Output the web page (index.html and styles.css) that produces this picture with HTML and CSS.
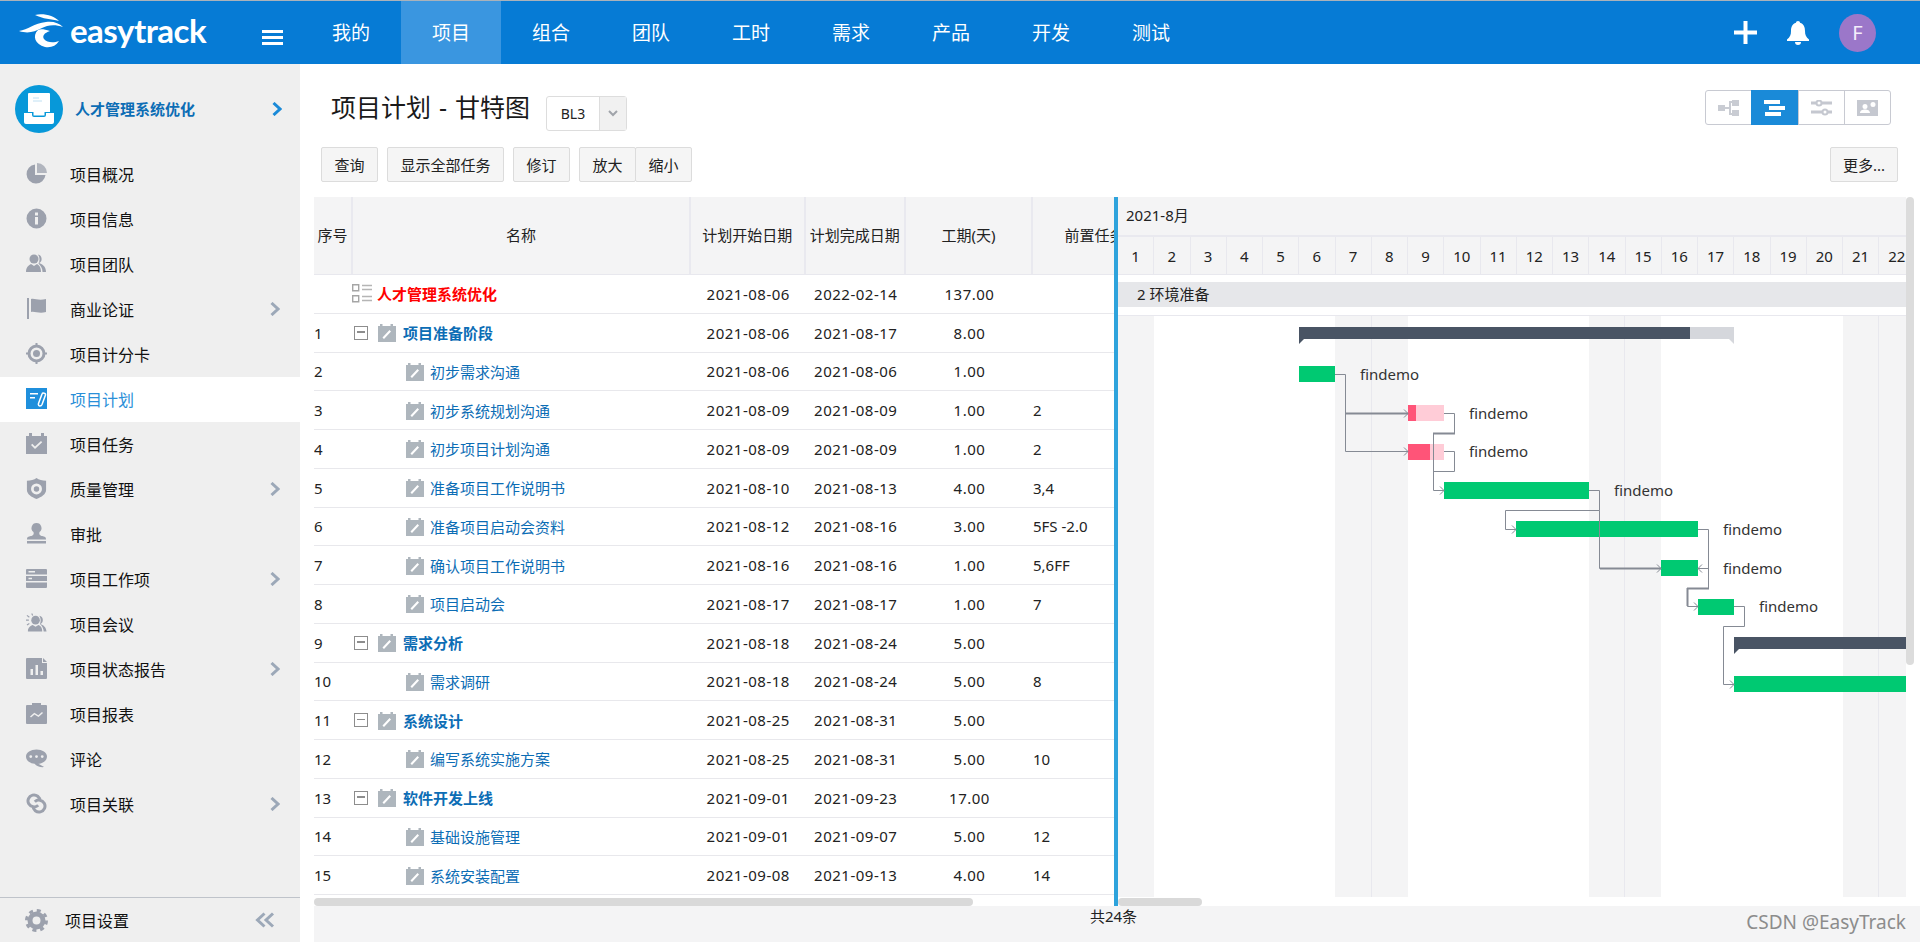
FILE: index.html
```html
<!DOCTYPE html>
<html lang="zh-CN">
<head>
<meta charset="utf-8">
<title>项目计划 - 甘特图</title>
<link rel="stylesheet" href="styles.css">
</head>
<body>
<svg class="defs" width="0" height="0" aria-hidden="true">
  <symbol id="i-pie" viewBox="0 0 21 21"><path d="M9 1.500a9.500 9.500 0 1 0 10.500 10.500H9z"/><path d="M11 0v10h10A10 10 0 0 0 11 0z" opacity=".75"/></symbol>
  <symbol id="i-info" viewBox="0 0 21 21"><path fill-rule="evenodd" d="M10.500.5a10 10 0 1 1 0 20 10 10 0 0 1 0-20zM9 4.500v3h3v-3zM9 9v7.500h3V9z"/></symbol>
  <symbol id="i-team" viewBox="0 0 21 21"><circle cx="8" cy="6" r="4.500"/><path d="M0 19c0-5 3-7 5-8l3 2 3-2c2 1 4 3 4 8z"/><path d="M12 1.500a4.500 4.500 0 0 1 1 8.500c3 1 7 3 7 9h-3.500c0-3.500-1.500-6-4-8.500 1.500-2.500 1.500-6-.5-9z"/></symbol>
  <symbol id="i-flag" viewBox="0 0 21 21"><rect x="1" y="0" width="2" height="21"/><path d="M5 1c4-1 7 2 15 0v13c-7 2-11-1-15 0z"/></symbol>
  <symbol id="i-target" viewBox="0 0 21 21"><circle cx="10.500" cy="10.500" r="7.500" fill="none" stroke="currentColor" stroke-width="3"/><circle cx="10.500" cy="10.500" r="3.500"/><path d="M9.500 0h2v3h-2zM9.500 18h2v3h-2zM0 9.500h3v2H0zM18 9.500h3v2h-3z"/></symbol>
  <symbol id="i-plan" viewBox="0 0 21 21"><rect width="21" height="21" fill="#1f8fdc"/><path d="M4 5h8v1.500H4zM4 9h5v1.500H4z" fill="#fff"/><path d="M14 18c-1 0-2-1-1.500-2.500L16 6c.5-1.500 4-1 3.500 1L16 16.500c-.4 1-1 1.500-2 1.500z" fill="none" stroke="#fff" stroke-width="1.500"/></symbol>
  <symbol id="i-task" viewBox="0 0 21 21"><path fill-rule="evenodd" d="M3 0h3v3h9V0h3v3h3v18H0V3h3zM5 12l1.300-1.300L9 13.400l6-5.400 1.200 1.300L9 16z"/></symbol>
  <symbol id="i-shield" viewBox="0 0 21 23"><path fill-rule="evenodd" d="M10.500 0C13 2 17 3 21 3v10c0 5-5 8-10.500 10C5 21 0 18 0 13V3c4 0 8-1 10.500-3zm0 6a6 6 0 1 0 0 12 6 6 0 0 0 0-12zm0 3a3 3 0 1 1 0 6 3 3 0 0 1 0-6z"/></symbol>
  <symbol id="i-stamp" viewBox="0 0 21 21"><path d="M10.500 0a5 5 0 0 1 3 9c-.6 2 0 3 2 4 2 .3 4.500.6 4.500 3v.500H1V16c0-2.400 2.500-2.700 4.500-3 2-1 2.600-2 2-4a5 5 0 0 1 3-9z"/><rect x="1" y="18" width="19" height="2.500"/></symbol>
  <symbol id="i-server" viewBox="0 0 21 19"><path fill-rule="evenodd" d="M1 0h19a1 1 0 0 1 1 1v4.500H0V1a1 1 0 0 1 1-1zM0 7h21v5H0zM0 13.500h21V18a1 1 0 0 1-1 1H1a1 1 0 0 1-1-1zM2.500 2v1.500H9V2zM2.500 8.700v1.500H6V8.700z"/></symbol>
  <symbol id="i-meeting" viewBox="0 0 22 21"><circle cx="10" cy="7" r="4.500"/><path d="M2 19c0-5 3-6 5-7l3 2 3-2c2 1 4 2 4 7z"/><path d="M14 2.500a4.500 4.500 0 0 1 1 8.500c3 1 6 3 6.500 8H18.500c0-3-1.500-6-4-8 1.500-2.500 1-6-.5-8.500z"/><path d="M1 2l2.500 2M0 7h3M1 12l2.500-1.500M6 0l1 2" stroke="currentColor" stroke-width="1.200"/></symbol>
  <symbol id="i-report" viewBox="0 0 21 21"><path fill-rule="evenodd" d="M1 0h15v5h5v15a1 1 0 0 1-1 1H1a1 1 0 0 1-1-1V1a1 1 0 0 1 1-1zM4.500 11v6H7v-6zM9.500 7v10H12V7zM14.500 13v4H17v-4z"/><path d="M17 0l4 4h-4z"/></symbol>
  <symbol id="i-chart" viewBox="0 0 21 21"><path fill-rule="evenodd" d="M1 2h5V0h9v2h5a1 1 0 0 1 1 1v17a1 1 0 0 1-1 1H1a1 1 0 0 1-1-1V3a1 1 0 0 1 1-1zm3 11.500l1 1 3.500-3 4 2.500 4.500-4-1-1-3.700 3.300-4-2.500z"/></symbol>
  <symbol id="i-comment" viewBox="0 0 22 19"><path fill-rule="evenodd" d="M11 0c6 0 11 3 11 7.500S17 15 13 15l6 3.500c-4 .5-8-1-10-3.500C4 14.500 0 12 0 7.500S5 0 11 0zM5 6a1.500 1.500 0 1 0 0 3 1.500 1.500 0 0 0 0-3zm6 0a1.500 1.500 0 1 0 0 3 1.500 1.500 0 0 0 0-3zm6 0a1.500 1.500 0 1 0 0 3 1.500 1.500 0 0 0 0-3z"/></symbol>
  <symbol id="i-link" viewBox="0 0 21 21"><path d="M12.200 12.200A6 6 0 1 1 14 8M8.800 8.800A6 6 0 1 1 7 13" fill="none" stroke="currentColor" stroke-width="3"/></symbol>
  <symbol id="i-gear" viewBox="0 0 23 23"><circle cx="11.500" cy="11.500" r="6.500" fill="none" stroke="currentColor" stroke-width="5"/><circle cx="11.500" cy="11.500" r="10" fill="none" stroke="currentColor" stroke-width="3" stroke-dasharray="4 3.850"/></symbol>
  <symbol id="i-chev" viewBox="0 0 10 14"><path d="M1.500 1L8 7l-6.500 6" fill="none" stroke="currentColor" stroke-width="3"/></symbol>
  <symbol id="i-doc" viewBox="0 0 18 19"><path fill-rule="evenodd" d="M2 1h2.500v2h8V1H15v2h3v16H0V3h2zM4.500 14.500l1.500 1.500 7-7.500-1.500-1.500z"/></symbol>
</svg>

<header class="topbar">
  <div class="brand">
    <svg class="brand-mark" viewBox="0 0 48 40" width="48" height="40"><path fill="#fff" d="M17 5C26 3 36 6 41 11 33 9 25 9 17 5Z"/><path fill="#fff" d="M1 21C10 20 16 13 28 12 35 11 41 13 45 17 37 14 29 15 24 18 16 22 10 24 1 21Z"/><path fill="#fff" d="M20 20C14 26 17 34 27 37 33 38 38 36 41 31 36 33 29 33 26 29 24 26 26 23 32 21 26 19 22 19 20 20Z"/></svg>
    <span class="brand-name">easytrack</span>
  </div>
  <div class="hamburger"><i></i><i></i><i></i></div>
  <nav class="nav">
    <a>我的</a><a class="on">项目</a><a>组合</a><a>团队</a><a>工时</a><a>需求</a><a>产品</a><a>开发</a><a>测试</a>
  </nav>
  <div class="top-tools">
    <svg class="t-plus" width="23" height="23" viewBox="0 0 23 23"><path d="M9.500 0h4v9.500H23v4h-9.500V23h-4v-9.500H0v-4h9.500z" fill="#fff"/></svg>
    <svg class="t-bell" width="22" height="24" viewBox="0 0 22 24"><path fill="#fff" d="M11 0c1.200 0 2 .8 2 1.800C17 3 18 6.500 18 10c0 4 1 6 4 8.500V20H0v-1.500C3 16 4 14 4 10c0-3.500 1-7 5-8.200C9 .8 9.800 0 11 0zM8 21h6a3 3 0 0 1-6 0z"/></svg>
    <span class="avatar">F</span>
  </div>
</header>

<div class="body">
  <aside class="side">
    <div class="proj">
      <span class="proj-logo"><svg width="48" height="48" viewBox="0 0 48 48"><path d="M14 8h20a1 1 0 0 1 1 1v18h-5.500v3.500h-11V27H13V9a1 1 0 0 1 1-1z" fill="#fff"/><path d="M9 28h8v2a2 2 0 0 0 2 2h10a2 2 0 0 0 2-2v-2h8v9a2 2 0 0 1-2 2H11a2 2 0 0 1-2-2z" fill="#fff"/><path d="M18 13h6M18 16h9" stroke="#bfe0f3" stroke-width="1"/></svg></span>
      <span class="proj-name">人才管理系统优化</span>
      <svg class="proj-chev" width="10" height="14"><use href="#i-chev"/></svg>
    </div>
    <ul class="menu">
      <li><svg class="mi"><use href="#i-pie"/></svg><span>项目概况</span></li>
      <li><svg class="mi"><use href="#i-info"/></svg><span>项目信息</span></li>
      <li><svg class="mi"><use href="#i-team"/></svg><span>项目团队</span></li>
      <li><svg class="mi"><use href="#i-flag"/></svg><span>商业论证</span><svg class="chev"><use href="#i-chev"/></svg></li>
      <li><svg class="mi"><use href="#i-target"/></svg><span>项目计分卡</span></li>
      <li class="on"><svg class="mi"><use href="#i-plan"/></svg><span>项目计划</span></li>
      <li><svg class="mi"><use href="#i-task"/></svg><span>项目任务</span></li>
      <li><svg class="mi"><use href="#i-shield"/></svg><span>质量管理</span><svg class="chev"><use href="#i-chev"/></svg></li>
      <li><svg class="mi"><use href="#i-stamp"/></svg><span>审批</span></li>
      <li><svg class="mi"><use href="#i-server"/></svg><span>项目工作项</span><svg class="chev"><use href="#i-chev"/></svg></li>
      <li><svg class="mi"><use href="#i-meeting"/></svg><span>项目会议</span></li>
      <li><svg class="mi"><use href="#i-report"/></svg><span>项目状态报告</span><svg class="chev"><use href="#i-chev"/></svg></li>
      <li><svg class="mi"><use href="#i-chart"/></svg><span>项目报表</span></li>
      <li><svg class="mi"><use href="#i-comment"/></svg><span>评论</span></li>
      <li><svg class="mi"><use href="#i-link"/></svg><span>项目关联</span><svg class="chev"><use href="#i-chev"/></svg></li>
    </ul>
    <div class="side-foot">
      <svg class="gear"><use href="#i-gear"/></svg>
      <span>项目设置</span>
      <svg class="collapse" width="20" height="16" viewBox="0 0 20 16"><path d="M9.500 1.500L2.500 8l7 6.500M18 1.500L11 8l7 6.500" fill="none" stroke="currentColor" stroke-width="3"/></svg>
    </div>
  </aside>

  <main class="main">
    <div class="title-row">
      <h1>项目计划 - 甘特图</h1>
      <div class="select"><span class="sel-val">BL3</span><span class="sel-arrow"><svg width="10" height="7" viewBox="0 0 10 7"><path d="M1 1l4 4 4-4" fill="none" stroke="#a0a4aa" stroke-width="2"/></svg></span></div>
      <div class="seg">
        <a><svg width="21" height="16" viewBox="0 0 21 16"><path d="M0 5h7v6H0zM7 7h4V1h3v2h-1v10h1v2h-3V9H7z" fill="#c9ccd3"/><path d="M14 0h7v6h-7zM14 10h7v6h-7z" fill="#c9ccd3"/></svg></a>
        <a class="on"><svg width="21" height="16" viewBox="0 0 21 16"><path d="M0 0h16v4H0zM5 6h16v4H5zM1 12h16v4H1z" fill="#fff"/></svg></a>
        <a><svg width="21" height="16" viewBox="0 0 21 16"><path d="M0 3h5M11 3h10M0 12h11M17 12h4" stroke="#c5c8d0" stroke-width="3"/><circle cx="8" cy="3" r="2.500" fill="none" stroke="#c5c8d0" stroke-width="2"/><circle cx="14" cy="12" r="2.500" fill="none" stroke="#c5c8d0" stroke-width="2"/></svg></a>
        <a><svg width="21" height="16" viewBox="0 0 21 16"><path fill="#c5c8d0" fill-rule="evenodd" d="M0 0h21v16H0zM8 4a2.500 2.500 0 1 0 0 5 2.500 2.500 0 0 0 0-5zM3 13c0-2.500 2.500-3.500 5-3.500S13 10.500 13 13zM16 2a2.500 2.500 0 1 0 0 5 2.500 2.500 0 0 0 0-5z"/></svg></a>
      </div>
    </div>
    <div class="toolbar">
      <button>查询</button>
      <button>显示全部任务</button>
      <button>修订</button>
      <div class="btn-group"><button>放大</button><button>缩小</button></div>
      <button class="more">更多...</button>
    </div>

    <div class="gantt">
      <section class="grid-pane">
        <div class="g-head g-cols">
          <div>序号</div><div>名称</div><div>计划开始日期</div><div>计划完成日期</div><div>工期(天)</div><div class="pred">前置任务</div>
        </div>
        <div class="g-row g-cols root"><div></div><div class="nm"><svg class="list-ic" width="20" height="19" viewBox="0 0 20 19"><path d="M.7.700h6v6h-6zM.7 11.700h6v6h-6z" fill="none" stroke="#a5a5a5" stroke-width="1.400"/><path d="M10 1.500h10M10 5.500h10M10 12.500h10M10 16.500h10" stroke="#b5b5b5" stroke-width="1.500"/></svg><b class="red">人才管理系统优化</b></div><div>2021-08-06</div><div>2022-02-14</div><div>137.00</div><div></div></div>
        <div class="g-row g-cols"><div>1</div><div class="nm"><span class="fold"></span><svg class="doc"><use href="#i-doc"/></svg><b>项目准备阶段</b></div><div>2021-08-06</div><div>2021-08-17</div><div>8.00</div><div></div></div>
        <div class="g-row g-cols"><div>2</div><div class="nm kid"><svg class="doc"><use href="#i-doc"/></svg><a>初步需求沟通</a></div><div>2021-08-06</div><div>2021-08-06</div><div>1.00</div><div></div></div>
        <div class="g-row g-cols"><div>3</div><div class="nm kid"><svg class="doc"><use href="#i-doc"/></svg><a>初步系统规划沟通</a></div><div>2021-08-09</div><div>2021-08-09</div><div>1.00</div><div>2</div></div>
        <div class="g-row g-cols"><div>4</div><div class="nm kid"><svg class="doc"><use href="#i-doc"/></svg><a>初步项目计划沟通</a></div><div>2021-08-09</div><div>2021-08-09</div><div>1.00</div><div>2</div></div>
        <div class="g-row g-cols"><div>5</div><div class="nm kid"><svg class="doc"><use href="#i-doc"/></svg><a>准备项目工作说明书</a></div><div>2021-08-10</div><div>2021-08-13</div><div>4.00</div><div>3,4</div></div>
        <div class="g-row g-cols"><div>6</div><div class="nm kid"><svg class="doc"><use href="#i-doc"/></svg><a>准备项目启动会资料</a></div><div>2021-08-12</div><div>2021-08-16</div><div>3.00</div><div>5FS -2.0</div></div>
        <div class="g-row g-cols"><div>7</div><div class="nm kid"><svg class="doc"><use href="#i-doc"/></svg><a>确认项目工作说明书</a></div><div>2021-08-16</div><div>2021-08-16</div><div>1.00</div><div>5,6FF</div></div>
        <div class="g-row g-cols"><div>8</div><div class="nm kid"><svg class="doc"><use href="#i-doc"/></svg><a>项目启动会</a></div><div>2021-08-17</div><div>2021-08-17</div><div>1.00</div><div>7</div></div>
        <div class="g-row g-cols"><div>9</div><div class="nm"><span class="fold"></span><svg class="doc"><use href="#i-doc"/></svg><b>需求分析</b></div><div>2021-08-18</div><div>2021-08-24</div><div>5.00</div><div></div></div>
        <div class="g-row g-cols"><div>10</div><div class="nm kid"><svg class="doc"><use href="#i-doc"/></svg><a>需求调研</a></div><div>2021-08-18</div><div>2021-08-24</div><div>5.00</div><div>8</div></div>
        <div class="g-row g-cols"><div>11</div><div class="nm"><span class="fold"></span><svg class="doc"><use href="#i-doc"/></svg><b>系统设计</b></div><div>2021-08-25</div><div>2021-08-31</div><div>5.00</div><div></div></div>
        <div class="g-row g-cols"><div>12</div><div class="nm kid"><svg class="doc"><use href="#i-doc"/></svg><a>编写系统实施方案</a></div><div>2021-08-25</div><div>2021-08-31</div><div>5.00</div><div>10</div></div>
        <div class="g-row g-cols"><div>13</div><div class="nm"><span class="fold"></span><svg class="doc"><use href="#i-doc"/></svg><b>软件开发上线</b></div><div>2021-09-01</div><div>2021-09-23</div><div>17.00</div><div></div></div>
        <div class="g-row g-cols"><div>14</div><div class="nm kid"><svg class="doc"><use href="#i-doc"/></svg><a>基础设施管理</a></div><div>2021-09-01</div><div>2021-09-07</div><div>5.00</div><div>12</div></div>
        <div class="g-row g-cols"><div>15</div><div class="nm kid"><svg class="doc"><use href="#i-doc"/></svg><a>系统安装配置</a></div><div>2021-09-08</div><div>2021-09-13</div><div>4.00</div><div>14</div></div>
        <div class="hscroll"><i class="thumb-l"></i></div>
      </section>

      <div class="splitter"></div>

      <section class="chart-pane">
        <div class="chart-col">
          <div class="month">2021-8月</div>
          <div class="days"><span>1</span><span>2</span><span>3</span><span>4</span><span>5</span><span>6</span><span>7</span><span>8</span><span>9</span><span>10</span><span>11</span><span>12</span><span>13</span><span>14</span><span>15</span><span>16</span><span>17</span><span>18</span><span>19</span><span>20</span><span>21</span><span>22</span></div>
          <div class="band-wrap"><div class="band">2 环境准备</div></div>
          <div class="canvas">
            <i class="wk" style="left:0;width:36px"></i>
            <i class="wk" style="left:217px;width:73px"></i>
            <i class="wk" style="left:471px;width:72px"></i>
            <i class="wk" style="left:725px;width:63px"></i>
            <i class="wl" style="left:253px"></i>
            <i class="wl" style="left:506px"></i>
            <i class="wl" style="left:760px"></i>

            <i class="bar sum-rest" style="left:572px;top:11px;width:44px"></i>
            <i class="bar sum" style="left:181px;top:11px;width:391px"></i>
            <i class="bar ok" style="left:181px;top:50px;width:36px"></i>
            <i class="bar pink" style="left:290px;top:89px;width:36px"></i>
            <i class="bar late" style="left:290px;top:89px;width:8px"></i>
            <i class="bar pink" style="left:290px;top:128px;width:36px"></i>
            <i class="bar late" style="left:290px;top:128px;width:22px"></i>
            <i class="bar ok tall" style="left:326px;top:166px;width:145px"></i>
            <i class="bar ok" style="left:398px;top:205px;width:182px"></i>
            <i class="bar ok" style="left:543px;top:244px;width:37px"></i>
            <i class="bar ok" style="left:580px;top:283px;width:36px"></i>
            <i class="bar sum" style="left:616px;top:321px;width:172px"></i>
            <i class="bar ok" style="left:616px;top:360px;width:172px"></i>

            <svg class="links" width="788" height="581" viewBox="1118 316 788 581">
              <g fill="none" stroke="#858a94" stroke-width="1">
                <path d="M1335 374.500H1345.500V451.500H1408"/>
                <path d="M1444 413.500H1454.500V433.500H1433.500V490.500H1444"/>
                <path d="M1444 451.500H1454.500V471.500H1433.500"/>
                <path d="M1589 490.500H1599.500V510.500H1505.500V529.500H1516"/>
                <path d="M1599.500 510.500V568.500H1661"/>
                <path d="M1698 529.500H1708.500V588.500H1687.500V606.500H1698"/>
                <path d="M1708.500 568.500H1698"/>
                <path d="M1734 606.500H1744.500V626.500H1723.500V684.500H1734"/>
                <path d="M1404 409.500l4 4-4 4M1404 447.500l4 4-4 4M1440 486.500l4 4-4 4M1512 525.500l4 4-4 4M1657 564.500l4 4-4 4M1702 564.500l-4 4 4 4M1694 602.500l4 4-4 4M1730 680.500l4 4-4 4"/>
              </g>
              <path d="M1345 413.500H1408M1433 433.500H1455M1600 568.500H1661M1687 588.500H1709M1687.500 588V606" fill="none" stroke="#858a94" stroke-width="2"/>
            </svg>

            <span class="lbl" style="left:242px;top:47px">findemo</span>
            <span class="lbl" style="left:351px;top:86px">findemo</span>
            <span class="lbl" style="left:351px;top:124px">findemo</span>
            <span class="lbl" style="left:496px;top:163px">findemo</span>
            <span class="lbl" style="left:605px;top:202px">findemo</span>
            <span class="lbl" style="left:605px;top:241px">findemo</span>
            <span class="lbl" style="left:641px;top:279px">findemo</span>
          </div>
          <div class="hscroll"><i class="thumb-r"></i></div>
        </div>
        <div class="vscroll"><i></i></div>
      </section>
    </div>
    <footer class="count">共24条</footer>
  </main>
</div>
<div class="watermark">CSDN @EasyTrack</div>
</body>
</html>
```

FILE: styles.css
```css
* { box-sizing: border-box; }
html, body { margin: 0; height: 100%; overflow: hidden; }
body {
  font-family: "Noto Sans", "Noto Sans CJK SC", sans-serif;
  font-size: 15px;
  color: #222;
  background: #fff;
  display: flex;
  flex-direction: column;
  height: 942px;
  position: relative;
}
.defs { position: absolute; }
ul { list-style: none; margin: 0; padding: 0; }

/* top bar */
.topbar {
  height: 64px;
  flex: none;
  display: flex;
  align-items: center;
  background: #067bd5;
  border-top: 1px solid #aab2ba;
  color: #fff;
}
.brand { width: 262px; flex: none; display: flex; align-items: center; padding-left: 18px; }
.brand-mark { flex: none; margin-top: -6px; }
.brand-name {
  font-family: Lato, "Noto Sans", sans-serif;
  font-weight: 700;
  font-size: 33px;
  line-height: 40px;
  margin-left: 4px;
  margin-top: -6px;
  letter-spacing: -.5px;
}
.hamburger { width: 21px; flex: none; display: flex; flex-direction: column; gap: 3px; margin-top: 9px; }
.hamburger i { display: block; height: 3px; background: #fff; }
.nav { display: flex; margin-left: 18px; height: 63px; }
.nav a { width: 100px; display: flex; align-items: center; justify-content: center; font-size: 19px; padding-bottom: 2px; }
.nav a.on { background: #3a96e0; }
.top-tools { margin-left: auto; padding-right: 44px; display: flex; align-items: center; }
.t-plus { margin-right: 30px; }
.t-bell { margin-right: 30px; }
.avatar {
  width: 37px; height: 38px; border-radius: 50%;
  background: #9b77c9; color: #f3eefb;
  display: flex; align-items: center; justify-content: center;
  font-size: 20px;
}

.body { flex: 1; display: flex; min-height: 0; }

/* sidebar */
.side { width: 300px; flex: none; background: #efefef; display: flex; flex-direction: column; color: #111; }
.proj { height: 88px; flex: none; display: flex; align-items: center; padding: 2px 0 0 15px; }
.proj-logo {
  width: 48px; height: 48px; border-radius: 50%;
  background: #0798d9;
  display: flex; align-items: center; justify-content: center;
  flex: none;
}
.proj-name { margin-left: 12px; font-weight: 700; font-size: 15px; color: #0c6db5; width: 197px; padding-bottom: 1px; }
.proj-chev { color: #1a8ad8; flex: none; }
.menu { flex: 1; }
.menu li { height: 45px; display: flex; align-items: center; padding-left: 26px; font-size: 16px; position: relative; }
.menu li span { padding-bottom: 2px; }
.menu li.on { background: #fff; color: #2a8fd8; }
.mi { width: 21px; height: 21px; fill: #9ca1ad; color: #9ca1ad; flex: none; margin-right: 23px; margin-top: -3px; }
.chev { width: 10px; height: 14px; color: #9ca8b8; position: absolute; left: 270px; top: 15px; }
.side-foot {
  height: 45px; flex: none; border-top: 1px solid #bfc3ca;
  display: flex; align-items: center; padding-left: 25px; font-size: 16px;
}
.gear { width: 23px; height: 23px; fill: #9ca1ad; color: #9ca1ad; margin-right: 17px; flex: none; }
.collapse { color: #9ca8b8; margin-left: 126px; }

/* main */
.main { flex: 1; min-width: 0; display: flex; flex-direction: column; }
.title-row { height: 83px; flex: none; display: flex; align-items: flex-start; padding: 26px 29px 0 31px; }
h1 { margin: 0; width: 215px; font-size: 25px; font-weight: 400; line-height: 35px; color: #1a1a1a; word-spacing: 1.500px; white-space: nowrap; }
.select {
  margin-top: 6px; width: 81px; height: 35px;
  display: flex; border: 1px solid #ddd; border-radius: 3px; font-size: 14px;
}
.sel-val { width: 52px; display: flex; align-items: center; justify-content: center; }
.sel-arrow { flex: 1; background: #f1f1f1; border-left: 1px solid #ddd; display: flex; align-items: center; justify-content: center; }
.seg { margin-left: auto; display: flex; width: 186px; height: 35px; border: 1px solid #c8cad2; border-radius: 3px; }
.seg a { flex: 1; display: flex; align-items: center; justify-content: center; border-left: 1px solid #c8cad2; }
.seg a:first-child { border-left: 0; }
.seg a.on { background: #1a8ad8; border-left-color: #1a8ad8; margin: -1px 0; }

.toolbar { height: 35px; flex: none; margin: 0 22px 15px 21px; display: flex; gap: 9px; }
button {
  font: inherit; font-size: 15px; color: #222;
  background: #f5f5f5; border: 1px solid #dcdcdc; border-radius: 2px;
  padding: 0 12.500px; height: 35px;
}
.btn-group { display: flex; }
.btn-group button { width: 57px; padding: 0; }
.btn-group button + button { margin-left: -1px; }
.more { margin-left: auto; width: 68px; padding: 0; }

/* gantt */
.gantt { height: 709px; flex: none; display: flex; margin: 0 6px 0 14px; }
.grid-pane { width: 800px; flex: none; overflow: hidden; display: flex; flex-direction: column; }
.g-cols { display: grid; grid-template-columns: 39px 338px 114.500px 100.500px 127px 123px; width: 842px; }
.g-head { height: 78px; flex: none; background: #f4f4f5; border-bottom: 1px solid #e8e8ee; font-size: 15px; }
.g-head > div { display: flex; align-items: center; justify-content: center; border-right: 2px solid #e9e9ef; padding-bottom: 2px; white-space: nowrap; }
.g-head > div.pred { border-right: 0; padding-left: 0; }
.g-row { height: 38.750px; flex: none; border-bottom: 1px solid #e8e8ec; align-items: center; letter-spacing: .5px; white-space: nowrap; }
.g-row > div:first-child { padding-left: 0; letter-spacing: 0; }
.g-row > div:nth-child(3), .g-row > div:nth-child(4), .g-row > div:nth-child(5) { text-align: center; }
.g-row > div:nth-child(6) { letter-spacing: 0; }
.nm { display: flex; align-items: center; letter-spacing: 0; color: #0c6db5; }
.nm b { font-weight: 700; color: #0c6db5; }
.nm b.red { color: #f00; }
.list-ic { margin-right: 5px; flex: none; margin-left: -1px; }
.fold { width: 14px; height: 14px; border: 1.500px solid #8d8d8d; margin: 0 10px 0 1px; position: relative; flex: none; }
.fold::after { content: ""; position: absolute; left: 2px; right: 2px; top: 4.500px; height: 1.500px; background: #8d8d8d; }
.doc { width: 18px; height: 19px; fill: #aeb6bd; flex: none; margin-right: 6px; }
.nm .fold + .doc { margin-right: 7px; }
.kid { padding-left: 53px; }
.hscroll { height: 8px; margin-top: auto; flex: none; position: relative; }
.hscroll i { position: absolute; top: 0; bottom: 0; background: #d9d9d9; border-radius: 4px; }
.thumb-l { left: 0; width: 659px; }
.thumb-r { left: 0; width: 84px; }

.splitter { width: 4px; flex: none; background: #2ea3dc; }
.chart-pane { flex: 1; min-width: 0; display: flex; }
.chart-col { width: 788px; flex: none; display: flex; flex-direction: column; }
.month { height: 38px; flex: none; background: #f4f4f5; padding: 0 0 3px 8px; display: flex; align-items: center; font-size: 15px; }
.days { height: 40px; flex: none; display: flex; background: #f4f4f5; border-top: 2px solid #e9e9ef; border-bottom: 1px solid #e8e8ee; overflow: hidden; }
.days span { width: 36.250px; flex: none; display: flex; align-items: center; justify-content: center; border-right: 1px solid #e8e8ee; }
.band-wrap { height: 41px; flex: none; padding-top: 7px; border-bottom: 1px solid #e8e8ee; }
.band { height: 25px; background: #e6e7ea; padding: 0 0 2px 19px; display: flex; align-items: center; font-size: 15px; }
.canvas { height: 581px; flex: none; position: relative; overflow: hidden; }
.wk { position: absolute; top: 0; bottom: 0; background: #f4f4f5; }
.wl { position: absolute; top: 0; bottom: 0; width: 1px; background: #e8e8ee; }
.bar { position: absolute; height: 16px; display: block; }
.bar.tall { height: 17px; }
.bar.ok { background: #00c972; }
.bar.pink { background: #ffccd7; }
.bar.late { background: #ff5478; }
.bar.sum, .bar.sum-rest { height: 12px; }
.bar.sum { background: #495464; }
.bar.sum-rest { background: #d5d7dc; }
.bar.sum::before {
  content: ""; position: absolute; left: 0; top: 12px;
  border-top: 5px solid #495464; border-right: 5px solid transparent;
}
.bar.sum-rest::after {
  content: ""; position: absolute; right: 0; top: 12px;
  border-top: 5px solid #d5d7dc; border-left: 5px solid transparent;
}
.links { position: absolute; left: 0; top: 0; }
.lbl { position: absolute; line-height: 22px; color: #333; }
.vscroll { width: 8px; flex: none; }
.vscroll i { display: block; height: 468px; background: #dcdcdc; border-radius: 4px; }

.count {
  flex: 1; background: #f4f4f5; margin-left: 14px;
  display: flex; justify-content: center; padding-right: 7px; font-size: 15px; line-height: 20px;
}
.watermark { position: absolute; right: 14px; bottom: 7px; font-size: 19px; color: #8c8c8c; }
```
